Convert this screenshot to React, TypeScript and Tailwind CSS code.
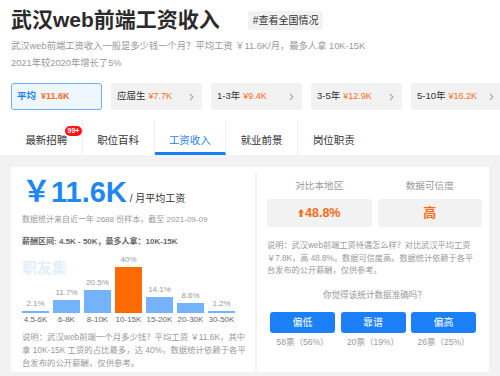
import React from "react";

const cards = [
  { label: "平均", value: "¥11.6K", active: true },
  { label: "应届生", value: "¥7.7K", active: false },
  { label: "1-3年", value: "¥9.4K", active: false },
  { label: "3-5年", value: "¥12.9K", active: false },
  { label: "5-10年", value: "¥16.2K", active: false },
];

const tabs = ["最新招聘", "职位百科", "工资收入", "就业前景", "岗位职责"];

const bars = [
  { l: "4.5-6K", p: "2.1%", h: 2, o: false },
  { l: "6-8K", p: "11.7%", h: 13, o: false },
  { l: "8-10K", p: "20.5%", h: 23, o: false },
  { l: "10-15K", p: "40%", h: 46, o: true },
  { l: "15-20K", p: "14.1%", h: 16, o: false },
  { l: "20-30K", p: "8.6%", h: 10, o: false },
  { l: "30-50K", p: "1.2%", h: 2, o: false },
];

const votes = [
  { t: "偏低", v: "58票（56%）" },
  { t: "靠谱", v: "20票（19%）" },
  { t: "偏高", v: "26票（25%）" },
];

function Chevron() {
  return (
    <svg className="ml-auto" width="5" height="8" viewBox="0 0 5 8" fill="none">
      <polyline points="1,1 4,4 1,7" stroke="#aaa" strokeWidth="1.1" />
    </svg>
  );
}

export default function App() {
  return (
    <div className="w-[500px] h-[376px] overflow-hidden bg-white font-['Liberation_Sans','Noto_Sans_CJK_SC',sans-serif] text-[#333]">
      <div className="px-[11px] pt-[8px]">
        <div className="flex items-center h-[24px]">
          <div className="text-[21px] font-bold leading-[24px] text-[#2b2b2b] whitespace-nowrap">武汉web前端工资收入</div>
          <div className="ml-[28px] h-[19px] px-[5px] rounded-[3px] bg-[#f2f2f2] text-[10px] leading-[19px] text-[#333] whitespace-nowrap">#查看全国情况</div>
        </div>
        <div className="mt-[6px] text-[9.3px] leading-[17px] text-[#999] whitespace-nowrap">
          <div>武汉web前端工资收入一般是多少钱一个月？平均工资 ￥11.6K/月，最多人拿 10K-15K</div>
          <div>2021年较2020年增长了5%</div>
        </div>
      </div>

      <div className="mt-[11px] pl-[11px] flex gap-[9px] overflow-hidden">
        {cards.map((c) => (
          <div
            key={c.label}
            className={
              c.active
                ? "shrink-0 w-[91px] h-[27px] rounded-[3px] flex items-center px-[5px] bg-[#eef6ff] border border-[#6aaefc]"
                : "shrink-0 w-[91px] h-[27px] rounded-[3px] flex items-center pl-[6px] pr-[8px] bg-[#f2f2f2]"
            }
          >
            <span className={c.active ? "text-[9.5px] font-bold text-[#1a7ef7] whitespace-nowrap" : "text-[9.5px] text-[#333] whitespace-nowrap"}>{c.label}</span>
            <span className={c.active ? "ml-[5px] text-[9px] font-bold text-[#ff6a13] whitespace-nowrap" : "ml-[3px] text-[9px] text-[#ff6a13] whitespace-nowrap"}>{c.value}</span>
            {!c.active && <Chevron />}
          </div>
        ))}
      </div>

      <div className="mt-[10px] pl-[11px] flex h-[35px]">
        {tabs.map((t, i) => (
          <div
            key={t}
            className={
              (i === 2
                ? "text-[#1a7ef7] border-b-[3px] border-b-[#1a7ef7] "
                : "text-[#333] ") +
              (i < 4 ? "border-r border-r-[#eeeeee] " : "") +
              "relative w-[71.75px] h-[35px] pt-[12px] text-center text-[10.5px] leading-[16px] whitespace-nowrap"
            }
          >
            {t}
            {i === 0 && (
              <span className="absolute left-[54px] top-[6px] w-[17px] h-[10px] rounded-full bg-[#ff1414] text-white text-[7px] font-bold leading-[10px] text-center">99+</span>
            )}
          </div>
        ))}
      </div>

      <div className="bg-[#f2f2f2] pt-[12px] px-[11px] h-[221px]">
        <div className="bg-white flex h-[205px]">
          <div className="w-[244px] pl-[11px] pr-[10px]">
            <div className="mt-[11px] flex items-baseline h-[29px]">
              <span className="text-[29px] font-bold leading-[29px] text-[#1d87f6] whitespace-nowrap">￥11.6K</span>
              <span className="ml-[3px] text-[10px] text-[#333] whitespace-nowrap">/ 月平均工资</span>
            </div>
            <div className="mt-[7px] text-[8px] leading-[12px] text-[#999] whitespace-nowrap">数据统计来自近一年 2688 份样本，截至 2021-09-09</div>
            <div className="mt-[10px] text-[8px] font-bold leading-[12px] text-[#666] whitespace-nowrap">薪酬区间: 4.5K - 50K，最多人拿：10K-15K</div>
            <div className="relative mt-[5px]">
              <div className="absolute left-0 top-[5px] text-[15px] font-bold leading-[20px] text-[#e3eefc] whitespace-nowrap">职友集</div>
              <div className="relative flex gap-[4px] h-[60px] items-end">
                {bars.map((b) => (
                  <div key={b.l} className="w-[27px] flex flex-col items-center">
                    <div className="text-[8px] leading-[10px] text-[#999] whitespace-nowrap mb-[2px]">{b.p}</div>
                    <div className={b.o ? "w-full bg-[#ff6a00]" : "w-full bg-[#74b3fc]"} style={{ height: b.h }} />
                  </div>
                ))}
              </div>
              <div className="flex gap-[4px] mt-[1px] h-[12px]">
                {bars.map((b) => (
                  <div key={b.l} className="w-[27px] text-center text-[8px] leading-[12px] text-[#666] whitespace-nowrap">{b.l}</div>
                ))}
              </div>
            </div>
            <div className="mt-[4.5px] text-[8.4px] leading-[13px] text-[#999] whitespace-nowrap">
              <div>说明：武汉web前端一个月多少钱？平均工资 ￥11.6K，其中</div>
              <div>拿 10K-15K 工资的占比最多，达 40%，数据统计依赖于各平</div>
              <div>台发布的公开薪酬，仅供参考。</div>
            </div>
          </div>

          <div className="flex-1 mt-[6px] border-l-2 border-l-[#f2f2f2] pl-[10px] pr-[7px]">
            <div className="grid grid-cols-2 gap-x-[6px] pt-[7px]">
              <div>
                <div className="text-center text-[9.6px] leading-[12px] text-[#999]">对比本地区</div>
                <div className="mt-[7px] h-[28px] rounded-[3px] bg-[#f2f2f2] flex items-center justify-center text-[#ff6a13] font-bold">
                  <svg width="6" height="8" viewBox="0 0 6 8" className="mr-[1px]">
                    <polygon points="3,0 6,3.5 4.3,3.5 4.3,8 1.7,8 1.7,3.5 0,3.5" fill="#ff6a13" />
                  </svg>
                  <span className="text-[12.5px] leading-[14px]">48.8%</span>
                </div>
              </div>
              <div>
                <div className="text-center text-[9.6px] leading-[12px] text-[#999]">数据可信度</div>
                <div className="mt-[7px] h-[28px] rounded-[3px] bg-[#f2f2f2] flex items-center justify-center text-[#ff6a13] font-bold text-[13px]">高</div>
              </div>
            </div>
            <div className="mt-[13px] text-[8.2px] leading-[12.5px] text-[#999] whitespace-nowrap">
              <div>说明：武汉web前端工资待遇怎么样？对比武汉平均工资</div>
              <div>￥7.8K，高 48.8%。数据可信度高。数据统计依赖于各平</div>
              <div>台发布的公开薪酬，仅供参考。</div>
            </div>
            <div className="mt-[11.5px] text-center text-[8.6px] leading-[12px] text-[#999]">你觉得该统计数据准确吗？</div>
            <div className="mt-[11px] flex gap-[5.5px] pl-[3px]">
              {votes.map((v) => (
                <div key={v.t} className="w-[65px] flex flex-col">
                  <div className="h-[21px] rounded-[3px] bg-[#1b80f8] text-white text-[10px] flex items-center justify-center">{v.t}</div>
                  <div className="mt-[4px] text-center text-[8.5px] leading-[10px] text-[#999] whitespace-nowrap">{v.v}</div>
                </div>
              ))}
            </div>
          </div>
        </div>
      </div>
    </div>
  );
}
